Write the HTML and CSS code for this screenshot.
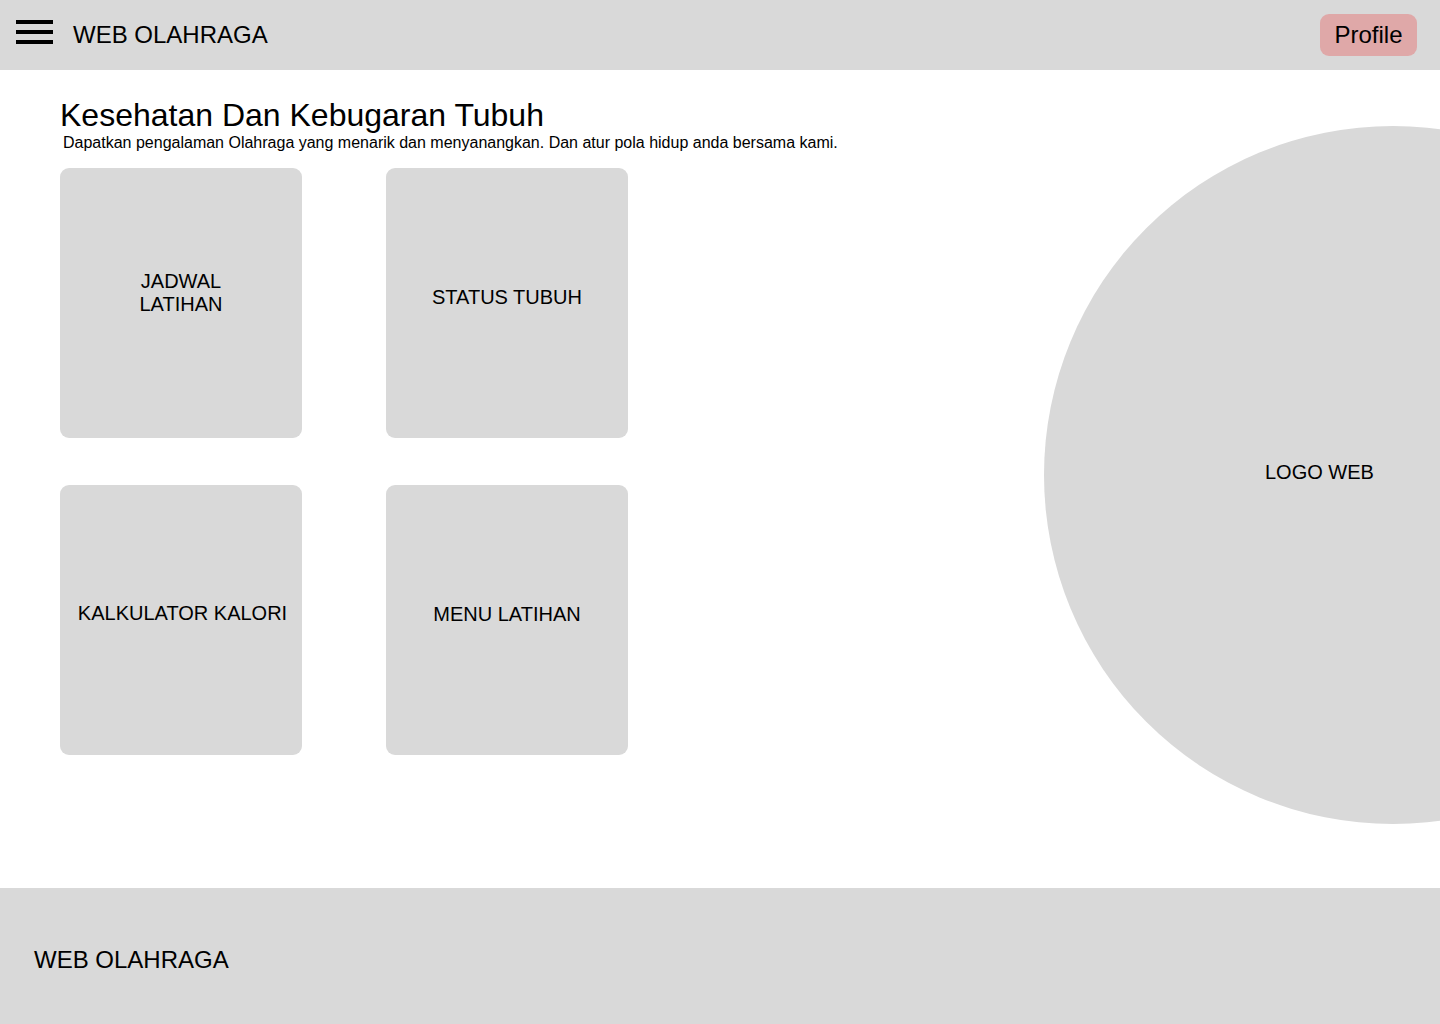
FILE: index.html
```html
<!DOCTYPE html>
<html lang="id">

<head>
    <meta charset="UTF-8">
    <title>Web Olahraga</title>
    <link rel="stylesheet" href="styles.css">
</head>

<body>
    <div class="top-bar">
        <span class="menu-btn">
            <svg width="37" height="24" viewBox="0 0 37 24">
                <rect x="0" y="0" width="37" height="4" fill="#000"></rect>
                <rect x="0" y="10" width="37" height="4" fill="#000"></rect>
                <rect x="0" y="20" width="37" height="4" fill="#000"></rect>
            </svg>
        </span>
        <span class="site-name">WEB OLAHRAGA</span>
        <span class="profile-btn">Profile</span>
    </div>
    <div class="main">
        <div class="intro">
            <h1>Kesehatan Dan Kebugaran Tubuh</h1>
            <p>Dapatkan pengalaman Olahraga yang menarik dan menyanangkan. Dan atur pola hidup anda bersama kami.</p>
        </div>
        <ul class="menu-grid">
            <li class="two-line">JADWAL<br>LATIHAN</li>
            <li>STATUS TUBUH</li>
            <li class="shift-right">KALKULATOR KALORI</li>
            <li>MENU LATIHAN</li>
        </ul>
        <div class="logo-circle">
            <span>LOGO WEB</span>
        </div>
    </div>
    <div class="footer">
        <span>WEB OLAHRAGA</span>
    </div>
</body>

</html>
```

FILE: styles.css
```css
body,
div,
ul,
li,
h1,
p,
span {
    padding: 0;
    margin: 0;
}

li {
    list-style: none;
}

body {
    font-family: "Liberation Sans", Arial, sans-serif;
    color: #000;
    background: #fff;
}

.top-bar {
    display: flex;
    align-items: center;
    height: 70px;
    padding: 0 23px 0 16px;
    background: #d9d9d9;
}

.top-bar .menu-btn {
    display: flex;
    align-self: flex-start;
    width: 37px;
    height: 24px;
    margin-top: 20px;
}

.top-bar .site-name {
    margin-left: 20px;
    font-size: 24px;
}

.top-bar .profile-btn {
    margin-left: auto;
    width: 97px;
    height: 42px;
    line-height: 42px;
    text-align: center;
    font-size: 24px;
    background: #dfa8a8;
    border-radius: 9px;
}

.main {
    position: relative;
    height: 818px;
    overflow: hidden;
    padding-left: 60px;
    box-sizing: border-box;
}

.intro {
    padding-top: 29px;
}

.intro h1 {
    font-size: 32px;
    font-weight: normal;
    line-height: 1;
}

.intro p {
    margin-top: 4px;
    padding-left: 3px;
    font-size: 16px;
    line-height: 15px;
}

.menu-grid {
    display: grid;
    grid-template-columns: 242px 242px;
    grid-auto-rows: 270px;
    column-gap: 84px;
    row-gap: 47px;
    margin-top: 18px;
}

.menu-grid li {
    display: flex;
    align-items: center;
    justify-content: center;
    padding-bottom: 12px;
    box-sizing: border-box;
    text-align: center;
    font-size: 20px;
    line-height: 23px;
    background: #d9d9d9;
    border-radius: 9px;
}

.menu-grid li.two-line {
    padding-bottom: 20px;
}

.menu-grid li.shift-right {
    padding-left: 3px;
    padding-bottom: 14px;
}

.logo-circle {
    position: absolute;
    left: 1044px;
    top: 56px;
    width: 698px;
    height: 698px;
    border-radius: 50%;
    background: #d9d9d9;
    display: flex;
    align-items: center;
    padding-left: 221px;
    box-sizing: border-box;
    font-size: 20px;
}

.logo-circle span {
    margin-top: -6px;
}

.footer {
    display: flex;
    align-items: center;
    height: 136px;
    padding: 8px 0 0 34px;
    box-sizing: border-box;
    font-size: 24px;
    background: #d9d9d9;
}
```
